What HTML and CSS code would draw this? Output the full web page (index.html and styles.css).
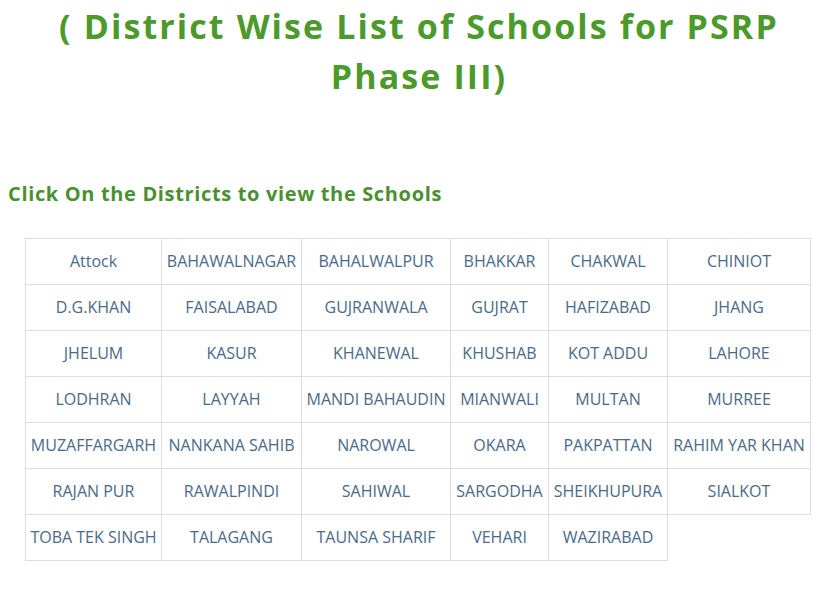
FILE: index.html
```html
<!DOCTYPE html>
<html>
<head>
<meta charset="utf-8">
<link rel="stylesheet" href="styles.css">
</head>
<body>
<h1 class="title">( District Wise List of Schools for PSRP Phase III)</h1>
<h3 class="sub">Click On the Districts to view the Schools</h3>
<table class="districts">
<colgroup>
<col class="c1"><col class="c2"><col class="c3"><col class="c4"><col class="c5"><col class="c6">
</colgroup>
<tr><td>Attock</td><td>BAHAWALNAGAR</td><td>BAHALWALPUR</td><td>BHAKKAR</td><td>CHAKWAL</td><td>CHINIOT</td></tr>
<tr><td>D.G.KHAN</td><td>FAISALABAD</td><td>GUJRANWALA</td><td>GUJRAT</td><td>HAFIZABAD</td><td>JHANG</td></tr>
<tr><td>JHELUM</td><td>KASUR</td><td>KHANEWAL</td><td>KHUSHAB</td><td>KOT ADDU</td><td>LAHORE</td></tr>
<tr><td>LODHRAN</td><td>LAYYAH</td><td>MANDI BAHAUDIN</td><td>MIANWALI</td><td>MULTAN</td><td>MURREE</td></tr>
<tr><td>MUZAFFARGARH</td><td>NANKANA SAHIB</td><td>NAROWAL</td><td>OKARA</td><td>PAKPATTAN</td><td>RAHIM YAR KHAN</td></tr>
<tr><td>RAJAN PUR</td><td>RAWALPINDI</td><td>SAHIWAL</td><td>SARGODHA</td><td>SHEIKHUPURA</td><td>SIALKOT</td></tr>
<tr><td>TOBA TEK SINGH</td><td>TALAGANG</td><td>TAUNSA SHARIF</td><td>VEHARI</td><td>WAZIRABAD</td></tr>
</table>
</body>
</html>
```
FILE: styles.css
```css
html, body {
  margin: 0;
  padding: 0;
  background: #ffffff;
}
body {
  padding: 0 8px;
}
.title {
  margin: 1px 0 0 0;
  text-align: center;
  font-family: "Open Sans", sans-serif;
  font-weight: 700;
  font-size: 34px;
  line-height: 50px;
  letter-spacing: 2.1px;
  color: #4b9a2b;
  padding: 0 20px;
}
.sub {
  margin: 78px 0 0 0;
  font-family: "Open Sans", sans-serif;
  font-weight: 700;
  font-size: 20px;
  line-height: 30px;
  letter-spacing: 0.65px;
  color: #4a9030;
}
.districts {
  margin: 29px 0 0 17px;
  border-collapse: collapse;
  font-family: "Open Sans", sans-serif;
  font-size: 16px;
  color: #4a6a88;
}
.districts td {
  border: 1px solid #dddddd;
  height: 43px;
  padding: 0 0 2px 0;
  text-align: center;
  vertical-align: middle;
  white-space: nowrap;
}
.c1 { width: 136px; }
.c2 { width: 140px; }
.c3 { width: 149px; }
.c4 { width: 98px; }
.c5 { width: 119px; }
.c6 { width: 143px; }
```
